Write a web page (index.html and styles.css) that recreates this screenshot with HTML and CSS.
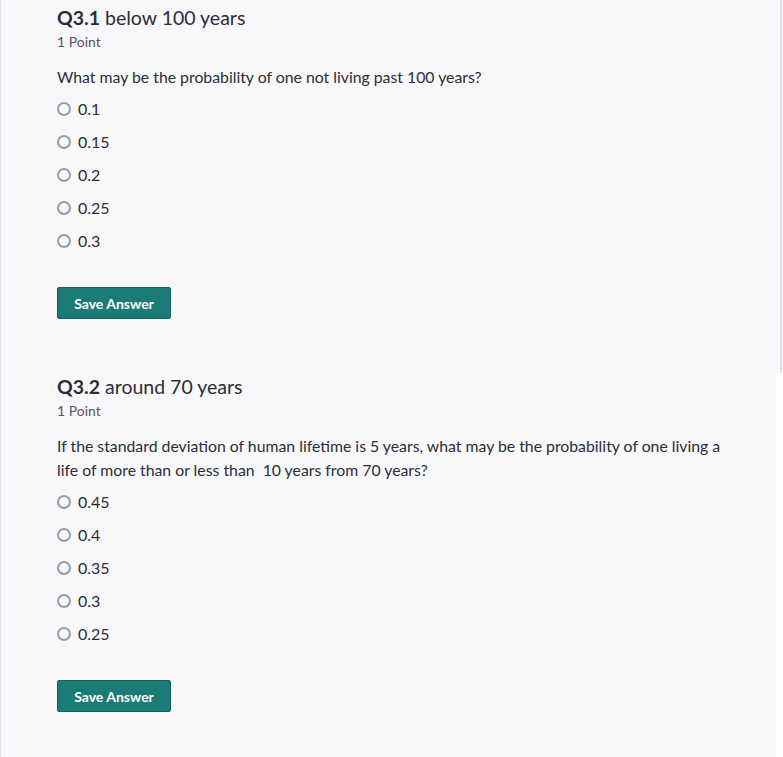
FILE: index.html
```html
<!DOCTYPE html>
<html>
<head>
<meta charset="utf-8">
<link rel="stylesheet" href="styles.css">
</head>
<body>
<div class="page">
  <section class="question">
    <h2 class="q-title"><span class="q-num">Q3.1</span> below 100 years</h2>
    <div class="q-points">1 Point</div>
    <p class="q-text">What may be the probability of one not living past 100 years?</p>
    <ul class="options">
      <li class="option"><span class="radio"></span><span>0.1</span></li>
      <li class="option"><span class="radio"></span><span>0.15</span></li>
      <li class="option"><span class="radio"></span><span>0.2</span></li>
      <li class="option"><span class="radio"></span><span>0.25</span></li>
      <li class="option"><span class="radio"></span><span>0.3</span></li>
    </ul>
    <button class="save">Save Answer</button>
  </section>
  <section class="question">
    <h2 class="q-title"><span class="q-num">Q3.2</span> around 70 years</h2>
    <div class="q-points">1 Point</div>
    <p class="q-text">If the standard deviation of human lifetime is 5 years, what may be the probability of one living a life of more than or less than&nbsp; 10 years from 70 years?</p>
    <ul class="options">
      <li class="option"><span class="radio"></span><span>0.45</span></li>
      <li class="option"><span class="radio"></span><span>0.4</span></li>
      <li class="option"><span class="radio"></span><span>0.35</span></li>
      <li class="option"><span class="radio"></span><span>0.3</span></li>
      <li class="option"><span class="radio"></span><span>0.25</span></li>
    </ul>
    <button class="save">Save Answer</button>
  </section>
</div>
<div class="scroll-thumb"></div>
<div class="scroll-track"></div>
</body>
</html>
```
FILE: styles.css
```css
html, body {
  margin: 0;
  padding: 0;
  height: 100%;
  overflow: hidden;
}
body {
  background: #f8f8fb;
  font-family: Lato, "Open Sans", sans-serif;
  color: #2b2d38;
  border-left: 1px solid #e2e2ec;
  box-sizing: border-box;
  position: relative;
}
.page {
  padding: 5px 0 0 56px;
  width: 680px;
}
.question {
  margin-bottom: 55px;
}
.q-title {
  margin: 0;
  font-size: 19.5px;
  font-weight: 400;
  line-height: 26px;
}
.q-num {
  font-weight: 700;
}
.q-points {
  font-size: 14px;
  color: #555560;
  line-height: 20px;
  margin-top: 1px;
}
.q-text {
  font-size: 15.8px;
  line-height: 24px;
  margin: 13px 0 3px;
}
.options {
  list-style: none;
  margin: 0;
  padding: 0;
}
.option {
  display: flex;
  align-items: center;
  gap: 7px;
  height: 33px;
  font-size: 16px;
}
.radio {
  width: 10px;
  height: 10px;
  border: 2.5px solid #979da3;
  border-radius: 50%;
  flex: none;
}
.save {
  margin-top: 30px;
  width: 114px;
  height: 32px;
  background: #1b7b77;
  border: 1px solid #14605c;
  border-radius: 2px;
  color: #fff;
  font-family: Lato, sans-serif;
  font-weight: 700;
  font-size: 14px;
  padding: 0;
}
.scroll-thumb {
  position: absolute;
  top: 0;
  left: 779px;
  width: 2px;
  height: 373px;
  background: #e0e0e8;
}
.scroll-track {
  position: absolute;
  top: 373px;
  left: 775px;
  width: 8px;
  bottom: 0;
  background: #ffffff;
}
```
